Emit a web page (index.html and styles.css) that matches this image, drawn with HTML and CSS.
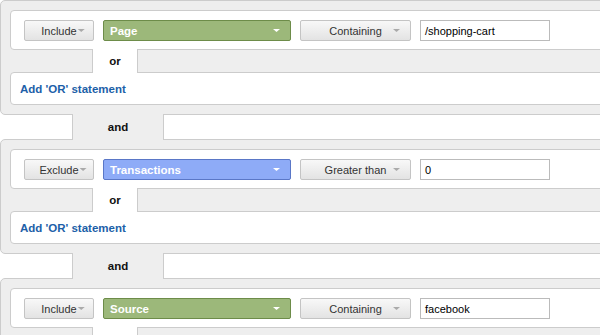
FILE: index.html
```html
<!DOCTYPE html>
<html>
<head>
<meta charset="utf-8">
<link rel="stylesheet" href="styles.css">
</head>
<body>
<div class="canvas">
  <div class="block">
    <div class="cond">
      <div class="btn"><span class="lbl">Include</span><span class="caret"></span></div>
      <div class="dd green"><span>Page</span><span class="caret white"></span></div>
      <div class="btn wide"><span class="lbl">Containing</span><span class="caret"></span></div>
      <div class="field">/shopping-cart</div>
    </div>
    <div class="or-row"><div class="or-tab">or</div></div>
    <div class="add"><a class="link">Add 'OR' statement</a></div>
  </div>
  <div class="and-row"><div class="and-tab">and</div></div>
  <div class="block">
    <div class="cond">
      <div class="btn"><span class="lbl">Exclude</span><span class="caret"></span></div>
      <div class="dd blue"><span>Transactions</span><span class="caret white"></span></div>
      <div class="btn wide"><span class="lbl">Greater than</span><span class="caret"></span></div>
      <div class="field">0</div>
    </div>
    <div class="or-row"><div class="or-tab">or</div></div>
    <div class="add"><a class="link">Add 'OR' statement</a></div>
  </div>
  <div class="and-row"><div class="and-tab">and</div></div>
  <div class="block">
    <div class="cond">
      <div class="btn"><span class="lbl">Include</span><span class="caret"></span></div>
      <div class="dd green"><span>Source</span><span class="caret white"></span></div>
      <div class="btn wide"><span class="lbl">Containing</span><span class="caret"></span></div>
      <div class="field">facebook</div>
    </div>
    <div class="or-row"><div class="or-tab">or</div></div>
    <div class="add"><a class="link">Add 'OR' statement</a></div>
  </div>
</div>
</body>
</html>
```
FILE: styles.css
```css
html, body {
  margin: 0;
  padding: 0;
  background: #fff;
  overflow: hidden;
}
body {
  font-family: "Liberation Sans", Arial, sans-serif;
  font-size: 11px;
  color: #333;
}
.canvas {
  width: 640px;
}
.block {
  background: #eeeeee;
  border: 1px solid #cccccc;
  border-radius: 5px;
  padding: 9px;
}
.cond {
  box-sizing: border-box;
  height: 40px;
  background: #fff;
  border: 1px solid #cccccc;
  border-radius: 4px;
  display: flex;
  align-items: flex-start;
  gap: 9px;
  padding: 9px 0 0 13px;
}
.btn {
  box-sizing: border-box;
  width: 70px;
  height: 21px;
  border: 1px solid #c4c4c4;
  border-radius: 2px;
  background: linear-gradient(#f8f8f8, #e3e3e3);
  display: flex;
  align-items: center;
  justify-content: center;
  color: #333;
}
.btn .lbl {
  white-space: nowrap;
}
.btn .caret {
  margin-left: 1px;
  margin-right: -8px;
}
.btn.wide {
  width: 111px;
  padding: 0 10px 0 17px;
}
.btn.wide .lbl {
  flex: 1;
  min-width: 0;
  text-align: center;
}
.btn.wide .caret {
  margin: 0;
}
.caret {
  flex: none;
  width: 7px;
  height: 3px;
  background: #aaaaaa;
  clip-path: polygon(0 0, 100% 0, 50% 100%);
}
.caret.white {
  background: #fff;
}
.dd {
  box-sizing: border-box;
  width: 188px;
  height: 21px;
  border: 1px solid;
  border-radius: 2px;
  display: flex;
  align-items: center;
  justify-content: space-between;
  padding: 0 10px 0 6px;
  color: #fff;
  font-weight: bold;
  font-size: 11.5px;
}
.green {
  background: #9cb87a;
  border-color: #6d8c49;
}
.blue {
  background: #8eabf7;
  border-color: #5a77c7;
}
.field {
  box-sizing: border-box;
  width: 130px;
  height: 21px;
  border: 1px solid #bbbbbb;
  background: #fff;
  display: flex;
  align-items: center;
  padding-left: 4px;
  color: #000;
}
.or-row {
  height: 22px;
  display: flex;
}
.or-tab {
  position: relative;
  z-index: 1;
  box-sizing: border-box;
  margin: -1px 0 -1px 82px;
  width: 46px;
  height: 24px;
  background: #fff;
  border-left: 1px solid #cccccc;
  border-right: 1px solid #cccccc;
  display: flex;
  align-items: center;
  justify-content: center;
  font-weight: bold;
  font-size: 11.5px;
  color: #111;
}
.add {
  box-sizing: border-box;
  height: 33px;
  background: #fff;
  border: 1px solid #cccccc;
  border-radius: 4px;
  display: flex;
  align-items: center;
  padding-left: 9px;
}
.link {
  color: #1c60a8;
  font-weight: bold;
  font-size: 11.5px;
  text-decoration: none;
}
.and-row {
  height: 24px;
  display: flex;
}
.and-tab {
  position: relative;
  z-index: 1;
  box-sizing: border-box;
  margin: -1px 0 -1px 72px;
  width: 92px;
  height: 26px;
  background: #eeeeee;
  border-left: 1px solid #cccccc;
  border-right: 1px solid #cccccc;
  display: flex;
  align-items: center;
  justify-content: center;
  font-weight: bold;
  font-size: 11.5px;
  color: #111;
}
```
